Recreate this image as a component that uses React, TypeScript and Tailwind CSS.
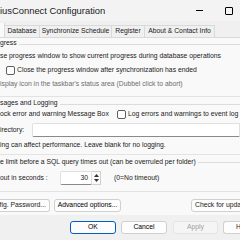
import React from "react";

const F = { fontFamily: '"Liberation Sans", Arial, sans-serif' };

function Check() {
  return <div className="w-[9px] h-[9px] rounded-[2px] border border-[#5f5f5f] bg-white shrink-0" />;
}

function Btn({ children, w, primary, disabled }: { children: React.ReactNode; w: string; primary?: boolean; disabled?: boolean }) {
  return (
    <div
      className={
        "h-[13px] flex items-center justify-center rounded-[3px] shrink-0 " +
        w +
        (primary
          ? " border-[1.5px] border-[#005fb8] bg-[#fdfdfd] text-black"
          : disabled
          ? " border border-[#e5e5e5] bg-[#f5f5f5] text-[#a0a0a0]"
          : " border border-[#d0d0d0] bg-[#fdfdfd] text-black")
      }
    >
      {children}
    </div>
  );
}

export default function App() {
  return (
    <div className="w-[240px] h-[240px] overflow-hidden bg-[#f0f0f0] text-[6.8px] text-[#1a1a1a] leading-none" style={F}>
      {/* title bar */}
      <div className="h-[21px] flex items-center bg-[#f3f3f3]">
        <div className="text-[9.4px] whitespace-nowrap">iusConnect Configuration</div>
        <div className="flex-1" />
        <div className="w-[7px] h-px bg-black mr-[22px]" />
        <div className="w-[8px] h-[8px] border border-black rounded-[1px] mr-[7px]" />
      </div>
      {/* tabs */}
      <div className="h-[16px] flex items-end">
        <div className="w-[5px] h-[14px] bg-[#f9f9f9] border-r border-[#d9d9d9] shrink-0" />
        {[
          ["Database", "w-[35px]"],
          ["Synchronize Schedule", "w-[72px]"],
          ["Register", "w-[33px]"],
          ["About & Contact Info", "w-[70px]"],
        ].map(([t, w]) => (
          <div key={t} className={"h-[12px] flex items-center justify-center border-t border-r border-[#d9d9d9] whitespace-nowrap shrink-0 " + w}>
            {t}
          </div>
        ))}
      </div>
      {/* panel */}
      <div className="h-[178px] bg-[#f9f9f9] border-t border-[#d9d9d9] flex flex-col whitespace-nowrap">
        <div className="h-[11px] flex items-center">
          <span>gress</span>
          <div className="flex-1 h-px bg-[#dcdcdc] ml-[2px] mt-[2px]" />
        </div>
        <div className="h-[15px] flex items-center">se progress window to show current progress during database operations</div>
        <div className="h-[13px] flex items-center pl-[6px] gap-[2px]">
          <Check />
          <span>Close the progress window after synchronization has ended</span>
        </div>
        <div className="h-[14px] flex items-center text-[#6d6d6d]">isplay icon in the taskbar's status area (Dubbel click to abort)</div>
        <div className="h-[5px]" />
        <div className="h-px bg-[#e3e3e3]" />
        <div className="h-[12px] flex items-center">
          <span>sages and Logging</span>
          <div className="flex-1 h-px bg-[#dcdcdc] ml-[3px] mt-[2px]" />
        </div>
        <div className="h-[11px] flex items-center">
          <span className="w-[117px]">ock error and warning Message Box</span>
          <Check />
          <span className="ml-[2px]">Log errors and warnings to event log</span>
        </div>
        <div className="h-[20px] flex items-center">
          <span className="w-[32px]">irectory:</span>
          <div className="flex-1 h-[14px] bg-white border border-[#e0e0e0] border-b-[#8a8a8a] rounded-l-[2px]" />
        </div>
        <div className="h-[10px] flex items-center">ing can affect performance. Leave blank for no logging.</div>
        <div className="h-[4px]" />
        <div className="h-px bg-[#e3e3e3]" />
        <div className="h-[14px] flex items-center">
          <span>e limit before a SQL query times out (can be overruled per folder)</span>
          <div className="flex-1 h-px bg-[#dcdcdc] ml-[2px]" />
        </div>
        <div className="h-[18px] flex items-center">
          <span className="w-[60px]">out in seconds :</span>
          <div className="w-[32px] h-[14px] bg-white border border-[#e0e0e0] border-b-[#8a8a8a] rounded-l-[2px] flex items-center justify-end pr-[3px]">30</div>
          <div className="w-[9px] h-[14px] bg-[#fbfbfb] border border-l-0 border-[#d0d0d0] flex flex-col items-center justify-center gap-[2px]">
            <svg width="5" height="3" viewBox="0 0 5 3"><path d="M0 3 L2.5 0 L5 3 Z" fill="#333" /></svg>
            <svg width="5" height="3" viewBox="0 0 5 3"><path d="M0 0 L2.5 3 L5 0 Z" fill="#333" /></svg>
          </div>
          <span className="ml-[13px]">(0=No timeout)</span>
        </div>
        <div className="h-[4px]" />
        <div className="h-px bg-[#e3e3e3]" />
        <div className="h-[7px]" />
        <div className="flex items-center">
          <div className="h-[13px] w-[50px] shrink-0 flex items-center justify-end pr-[3px] rounded-r-[3px] border border-l-0 border-[#d0d0d0] bg-[#fdfdfd]">fig. Password...</div>
          <div className="ml-[4px]">
            <Btn w="w-[67px]">Advanced options...</Btn>
          </div>
          <div className="w-[70px] shrink-0" />
          <div className="w-[66px] shrink-0 h-[13px] flex items-center pl-[3px] rounded-[3px] border border-[#d0d0d0] bg-[#fdfdfd]">Check for updates...</div>
        </div>
      </div>
      {/* bottom */}
      <div className="flex items-center pt-[6px] pl-[70px] gap-[5px] whitespace-nowrap">
        <Btn w="w-[46px]" primary>OK</Btn>
        <Btn w="w-[46px]">Cancel</Btn>
        <div className="ml-[1px]">
          <Btn w="w-[45px]" disabled>Apply</Btn>
        </div>
        <div className="w-[30px] h-[13px] flex items-center pl-[12px] rounded-l-[3px] border border-r-0 border-[#d0d0d0] bg-[#fdfdfd]">H</div>
      </div>
    </div>
  );
}
